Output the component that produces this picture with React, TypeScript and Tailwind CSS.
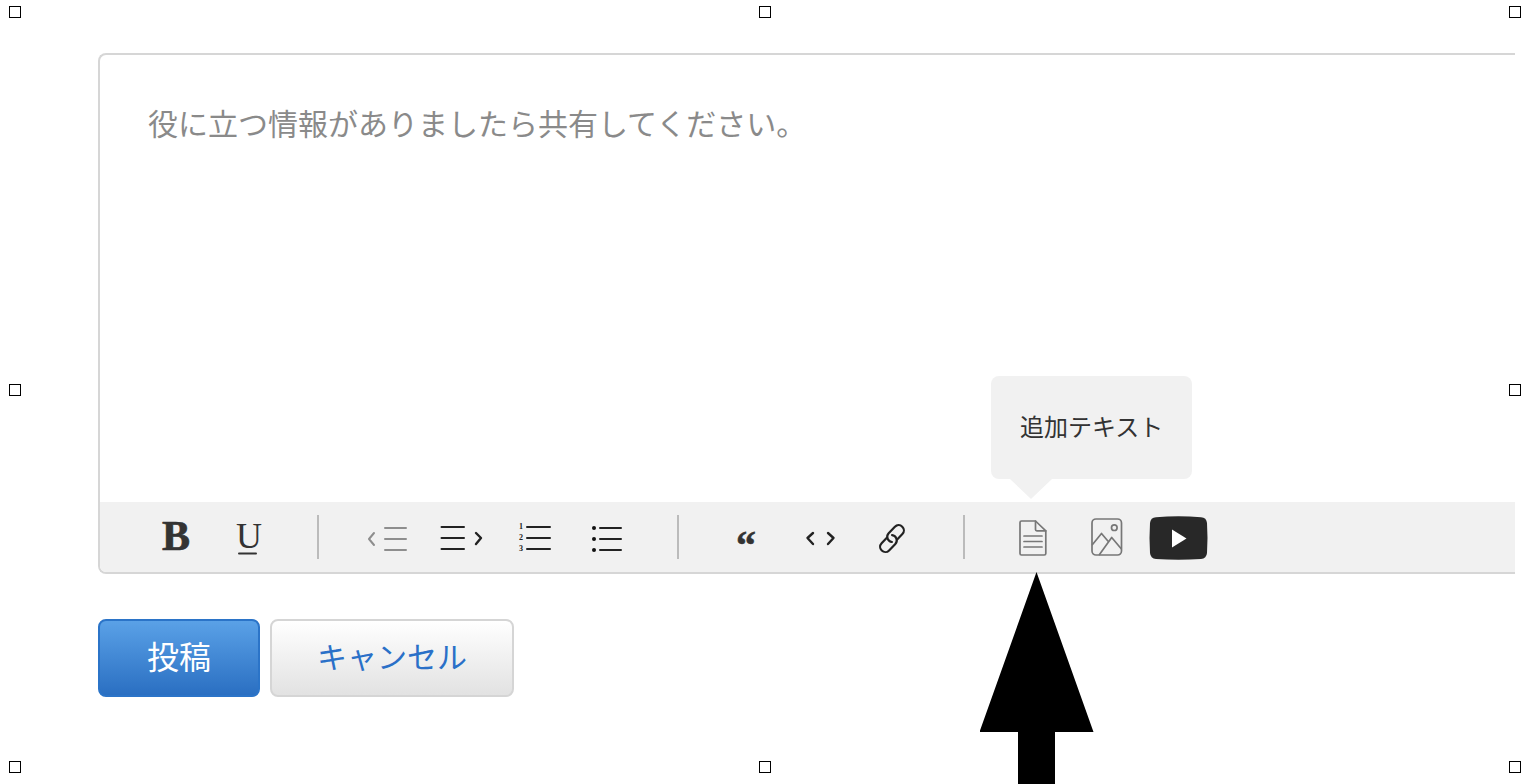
import type { ReactNode } from 'react';

type ToolButtonProps = {
  label: string;
  disabled?: boolean;
  children: ReactNode;
};

function ToolButton({ label, disabled, children }: ToolButtonProps) {
  return (
    <button type="button" aria-label={label} disabled={disabled} className="block shrink-0 text-[#222222] disabled:text-[#8e8e8e]">
      <svg width="74" height="70" viewBox="0 0 74 70" fill="none" stroke="currentColor" strokeWidth="2" strokeLinecap="round" strokeLinejoin="round">
        {children}
      </svg>
    </button>
  );
}

function Divider() {
  return <span className="mx-[31px] h-11 w-0.5 shrink-0 bg-[#bbbbbb]" />;
}

function Handle() {
  return <span className="size-3 border border-black bg-white" />;
}

function SelectionHandles() {
  return (
    <div className="pointer-events-none absolute inset-x-[9px] top-1.5 bottom-[11px] flex flex-col justify-between">
      <div className="flex justify-between">
        <Handle />
        <Handle />
        <Handle />
      </div>
      <div className="flex justify-between">
        <Handle />
        <Handle />
      </div>
      <div className="flex justify-between">
        <Handle />
        <Handle />
        <Handle />
      </div>
    </div>
  );
}

function AttachTextButton() {
  return (
    <div className="relative shrink-0">
      <ToolButton label="追加テキスト">
        <g stroke="#777777" strokeWidth="1.7">
          <path d="M25.5 19H39.5L49.8 28.8V51.5Q49.8 53 48.3 53H25.5Q24 53 24 51.5V20.5Q24 19 25.5 19Z" />
          <path d="M39.5 19V27.5Q39.5 28.8 40.8 28.8H49.8" />
          <path d="M28 34H46M28 39.5H46M28 45H46" />
        </g>
      </ToolButton>

      {/* Tooltip */}
      <div role="tooltip" className="absolute bottom-[93px] -left-[5px] rounded-lg bg-[#f1f1f1] px-[29px] py-8 text-2xl leading-[39px] whitespace-nowrap text-[#333333]">
        追加テキスト
        <svg className="absolute top-full left-[19px]" width="42" height="20" viewBox="0 0 42 20" fill="#f1f1f1">
          <path d="M0 0H42L21 20Z" />
        </svg>
      </div>

      {/* Pointer arrow */}
      <svg className="pointer-events-none absolute top-full -left-4" width="114" height="212" viewBox="0 0 114 212">
        <path d="M56.5 0L113.5 160H75V212H38V160H-0.5Z" />
      </svg>
    </div>
  );
}

function Toolbar() {
  return (
    <div className="flex items-center rounded-bl-md bg-[#f1f1f1] pl-[38px]">
      <ToolButton label="太字">
        <text x="24" y="48" fill="#333333" stroke="#333333" strokeWidth="0.7" className="font-['Liberation_Serif',serif] text-[42px] font-bold">B</text>
      </ToolButton>
      <ToolButton label="下線">
        <text x="24" y="46" fill="#333333" stroke="none" className="font-['Liberation_Serif',serif] text-[36px]">U</text>
        <path d="M27 51.5H44" stroke="#333333" />
      </ToolButton>

      <Divider />

      <ToolButton label="インデント解除" disabled>
        <path d="M24 31L19 37L24 43M35 26H56M35 37H56M35 48H56" />
      </ToolButton>
      <ToolButton label="インデント">
        <path d="M17.5 25H40M17.5 36H40M17.5 47H40" />
        <path d="M52 31L57 36L52 42" strokeWidth="2.4" />
      </ToolButton>
      <ToolButton label="番号付きリスト">
        <g fill="currentColor" stroke="none" className="font-['Liberation_Serif',serif] text-[8px] font-bold">
          <text x="21" y="27">1</text>
          <text x="21" y="38">2</text>
          <text x="21" y="49">3</text>
        </g>
        <path d="M29 25H52M29 36H52M29 47H52" />
      </ToolButton>
      <ToolButton label="箇条書き">
        <g fill="#111111" stroke="none">
          <circle cx="22" cy="26" r="2" />
          <circle cx="22" cy="37" r="2" />
          <circle cx="22" cy="48" r="2" />
        </g>
        <path d="M28 26H49M28 37H49M28 48H49" />
      </ToolButton>

      <Divider />

      <ToolButton label="引用">
        <text x="26" y="57" fill="#333333" stroke="#333333" strokeWidth="0.5" className="font-['Liberation_Serif',serif] text-[40px] font-bold">“</text>
      </ToolButton>
      <ToolButton label="コード">
        <path d="M29 31L23.5 36L29 42M44 31L49.5 36L44 42" strokeWidth="2.4" />
      </ToolButton>
      <ToolButton label="リンク">
        <g transform="translate(34 36.6) rotate(-46)" strokeWidth="2.2">
          <path d="M-3 -4.3H-10.5A5.2 5.2 0 0 0 -10.5 6.1H-1.5A5.2 5.2 0 0 0 2.5 -2.3" />
          <path d="M3 4.3H10.5A5.2 5.2 0 0 0 10.5 -6.1H1.5A5.2 5.2 0 0 0 -2.5 2.3" />
        </g>
      </ToolButton>

      <Divider />

      <AttachTextButton />
      <ToolButton label="画像">
        <g stroke="#777777" strokeWidth="1.7">
          <rect x="22" y="17" width="29.5" height="36" rx="4" />
          <circle cx="44.3" cy="25.7" r="2.8" />
          <path d="M22.5 42.5L31.5 31.5L38.3 39.5M29.5 52.5L41.7 35.5L51 46.5" />
        </g>
      </ToolButton>
      <ToolButton label="動画">
        <g stroke="none">
          <path d="M12 15.2Q34.5 13.5 57 15.2Q62.5 15.5 63 21Q64 36 63 51Q62.5 56.5 57 57Q34.5 58.5 12 57Q6.5 56.5 6 51Q5 36 6 21Q6.5 15.5 12 15.2Z" fill="#282828" />
          <path d="M28 27.5V45.5L42.5 36.5Z" fill="#ffffff" />
        </g>
      </ToolButton>
    </div>
  );
}

export default function App() {
  return (
    <main className="relative min-h-screen overflow-hidden bg-white pt-[53px] pr-[15px] pl-[98px] font-['Liberation_Sans','Noto_Sans_CJK_JP',sans-serif]">
      <form onSubmit={e => e.preventDefault()}>
        {/* Editor */}
        <div className="rounded-l-lg border-y-2 border-l-2 border-[#d6d6d6]">
          <textarea
            aria-label="コメント"
            placeholder="役に立つ情報がありましたら共有してください。"
            className="block h-[447px] w-full resize-none rounded-tl-md bg-transparent px-12 pt-[50px] text-3xl leading-10 text-[#333333] outline-none placeholder:text-[#8a8a8a]"
          />
          <Toolbar />
        </div>

        {/* Actions */}
        <div className="mt-[45px] flex gap-2.5">
          <button type="submit" className="rounded-lg border-2 border-[#2b74c8] bg-linear-to-b from-[#5aa1e7] to-[#2a6fc2] px-[47px] py-[17px] text-[32px] leading-10 text-white">
            投稿
          </button>
          <button type="button" className="rounded-lg border-2 border-[#d5d5d5] bg-linear-to-b from-white to-[#e2e2e2] px-[45px] py-[17px] text-3xl leading-10 text-[#2a70c8]">
            キャンセル
          </button>
        </div>
      </form>

      <SelectionHandles />
    </main>
  );
}
